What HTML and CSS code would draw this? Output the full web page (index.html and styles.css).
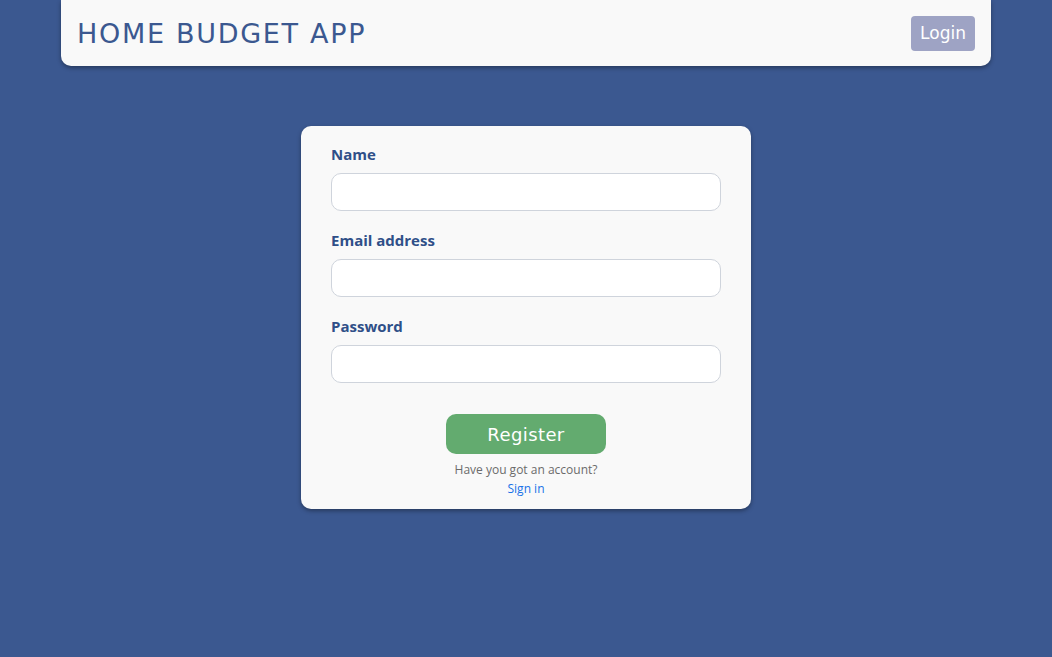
FILE: index.html
```html
<!DOCTYPE html>
<html>
<head>
<meta charset="utf-8">
<link rel="stylesheet" href="styles.css">
</head>
<body>
<div class="page">
  <header class="topbar">
    <div class="brand">HOME BUDGET APP</div>
    <button class="login">Login</button>
  </header>
  <main class="main">
    <form class="card">
      <label class="label">Name</label>
      <input class="input" type="text">
      <label class="label">Email address</label>
      <input class="input" type="email">
      <label class="label">Password</label>
      <input class="input" type="password">
      <div class="actions">
        <button type="button" class="register">Register</button>
        <div class="question">Have you got an account?</div>
        <a class="signin" href="#">Sign in</a>
      </div>
    </form>
  </main>
</div>
</body>
</html>
```
FILE: styles.css
```css
html, body {
  margin: 0;
  padding: 0;
  background: #3b5890;
  height: 100%;
}
.page {
  display: flex;
  flex-direction: column;
  align-items: center;
}
.topbar {
  width: 930px;
  height: 66px;
  box-sizing: border-box;
  background: #f9f9f9;
  border-radius: 0 0 10px 10px;
  box-shadow: 0 2px 4px rgba(0,0,0,0.35);
  display: flex;
  align-items: center;
  justify-content: space-between;
  padding: 0 16px 0 16px;
}
.brand {
  font-family: "DejaVu Sans", sans-serif;
  font-weight: 400;
  font-size: 27px;
  color: #3b5890;
  letter-spacing: 1.7px;
}
.login {
  font-family: "DejaVu Sans", sans-serif;
  font-weight: 400;
  font-size: 17px;
  color: #fff;
  background: #9ea3c4;
  border: none;
  border-radius: 4px;
  width: 64px;
  height: 35px;
  padding: 0;
  margin-top: 0;
}
.main {
  margin-top: 60px;
}
.card {
  width: 450px;
  box-sizing: border-box;
  background: #f9f9f9;
  border-radius: 10px;
  box-shadow: 0 2px 4px rgba(0,0,0,0.35);
  padding: 18px 30px 12px;
  display: flex;
  flex-direction: column;
}
.label {
  font-family: "Open Sans", sans-serif;
  font-weight: 700;
  font-size: 15px;
  color: #2f4f88;
  line-height: 20px;
  margin-bottom: 9px;
}
.input {
  height: 38px;
  box-sizing: border-box;
  border: 1px solid #cfd4dc;
  border-radius: 10px;
  background: #fff;
  margin: 0 0 19px;
  padding: 0 12px;
}
.actions {
  display: flex;
  flex-direction: column;
  align-items: center;
  margin-top: 12px;
}
.register {
  width: 160px;
  height: 40px;
  background: #63ab6f;
  color: #fff;
  border: none;
  border-radius: 10px;
  font-family: "DejaVu Sans", sans-serif;
  font-weight: 400;
  font-size: 18px;
  letter-spacing: 0.4px;
  padding: 0;
}
.question {
  font-family: "Open Sans", sans-serif;
  font-size: 12px;
  color: #6b6b6b;
  margin-top: 7px;
  line-height: 17px;
}
.signin {
  font-family: "Open Sans", sans-serif;
  font-size: 12px;
  color: #1a73e8;
  text-decoration: none;
  line-height: 17px;
  margin-top: 2px;
}
```
